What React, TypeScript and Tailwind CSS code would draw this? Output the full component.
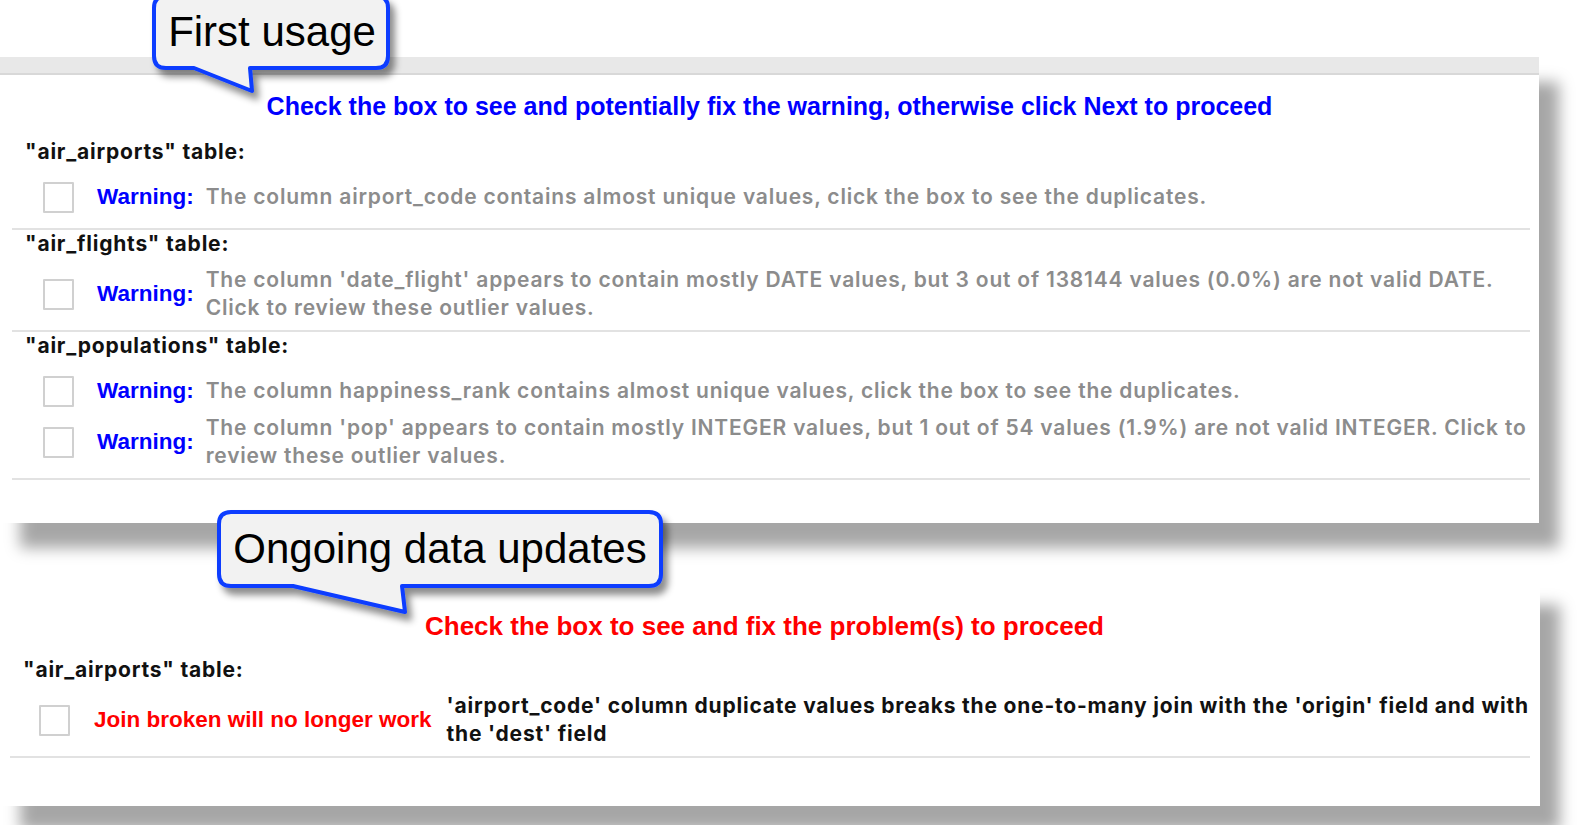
import React from "react";

const SANS = "font-['Inter',sans-serif]";
const ARIAL = "font-['Liberation_Sans',Arial,sans-serif]";

function Checkbox() {
  return <div className="w-[31px] h-[31px] shrink-0 border-2 border-[#d0d0d0] bg-white rounded-[1px]" />;
}

function TableHeader({ name }: { name: string }) {
  return (
    <div className={`h-[28px] leading-[28px] pl-[13px] text-[21px] tracking-[0.8px] font-bold text-[#111] whitespace-nowrap ${SANS}`}>
      "{name}" table:
    </div>
  );
}

function WarningRow({ lines }: { lines: string[] }) {
  return (
    <div className={`flex items-center pl-[31px] ${lines.length > 1 ? "h-[56px]" : "h-[46px]"}`}>
      <Checkbox />
      <span className={`ml-[23px] text-[22.5px] font-bold text-[#0000ff] ${ARIAL}`}>Warning:</span>
      <div className={`ml-[12px] text-[21px] tracking-[0.8px] leading-[28px] font-semibold text-[#8c8c8c] whitespace-nowrap ${SANS}`}>
        {lines.map((l, i) => (
          <div key={i}>{l}</div>
        ))}
      </div>
    </div>
  );
}

function Section({ name, children }: { name: string; children: React.ReactNode }) {
  return (
    <div className="ml-[12px] mr-[9px] border-b-2 border-[#e2e2e2]">
      <TableHeader name={name} />
      <div className="pt-2 pb-2">{children}</div>
    </div>
  );
}

export default function App() {
  return (
    <div className="relative w-[1578px] h-[825px] overflow-hidden bg-white">
      <div className="flex flex-col pt-[57px]">
        {/* first usage screenshot */}
        <div className="w-[1539px] bg-white shadow-[20px_25px_14px_rgba(0,0,0,0.35)] pb-[43px]">
          <div className="h-[18px] bg-[#e8e8e8] border-b-2 border-[#d8d8d8]" />
          <div className={`mt-[16px] h-[30px] leading-[30px] text-center text-[25px] font-bold text-[#0000ff] whitespace-nowrap ${ARIAL}`}>
            Check the box to see and potentially fix the warning, otherwise click Next to proceed
          </div>
          <div className="mt-[17px]">
            <Section name="air_airports">
              <WarningRow lines={["The column airport_code contains almost unique values, click the box to see the duplicates."]} />
            </Section>
            <Section name="air_flights">
              <WarningRow
                lines={[
                  "The column 'date_flight' appears to contain mostly DATE values, but 3 out of 138144 values (0.0%) are not valid DATE.",
                  "Click to review these outlier values.",
                ]}
              />
            </Section>
            <Section name="air_populations">
              <WarningRow lines={["The column happiness_rank contains almost unique values, click the box to see the duplicates."]} />
              <WarningRow
                lines={[
                  "The column 'pop' appears to contain mostly INTEGER values, but 1 out of 54 values (1.9%) are not valid INTEGER. Click to",
                  "review these outlier values.",
                ]}
              />
            </Section>
          </div>
        </div>

        {/* ongoing updates screenshot */}
        <div className="mt-[57px] w-[1540px] bg-white shadow-[20px_25px_14px_rgba(0,0,0,0.35)] pt-[31px] pb-[48px]">
          <div className={`h-[30px] leading-[30px] text-center pr-[11px] text-[26px] font-bold text-[#ff0000] whitespace-nowrap ${ARIAL}`}>
            Check the box to see and fix the problem(s) to proceed
          </div>
          <div className="mt-[15px] ml-[10px] mr-[10px] border-b-2 border-[#e2e2e2]">
            <TableHeader name="air_airports" />
            <div className="pt-2 pb-2">
              <div className="flex items-center h-[56px] pl-[29px]">
                <Checkbox />
                <span className={`ml-[24px] text-[22.5px] font-bold text-[#ff0000] whitespace-nowrap ${ARIAL}`}>Join broken will no longer work</span>
                <div className={`ml-[15px] text-[21px] tracking-[0.8px] leading-[28px] font-bold text-[#111] whitespace-nowrap ${SANS}`}>
                  <div>'airport_code' column duplicate values breaks the one-to-many join with the 'origin' field and with</div>
                  <div>the 'dest' field</div>
                </div>
              </div>
            </div>
          </div>
        </div>
      </div>

      {/* callouts */}
      <div className="absolute left-[140px] top-[-20px] w-[290px] h-[140px] z-10">
        <svg width="290" height="140" className="absolute inset-0">
          <defs>
            <filter id="sh1" x="-20%" y="-20%" width="140%" height="150%">
              <feDropShadow dx="5" dy="7" stdDeviation="3.5" floodColor="#000" floodOpacity="0.45" />
            </filter>
          </defs>
          <path
            d="M26,16 H236 Q248,16 248,28 V76 Q248,88 236,88 H110 L112,111 L54,88 H26 Q14,88 14,76 V28 Q14,16 26,16 Z"
            fill="#f2f2f2"
            stroke="#0a3cff"
            strokeWidth="4"
            strokeLinejoin="round"
            filter="url(#sh1)"
          />
        </svg>
        <div className={`absolute left-[15px] top-[16px] w-[234px] h-[72px] flex items-center justify-center text-[42px] leading-none text-black whitespace-nowrap ${ARIAL}`}>
          First usage
        </div>
      </div>

      <div className="absolute left-[200px] top-[495px] w-[500px] h-[140px] z-10">
        <svg width="500" height="140" className="absolute inset-0">
          <defs>
            <filter id="sh2" x="-20%" y="-20%" width="140%" height="150%">
              <feDropShadow dx="5" dy="7" stdDeviation="3.5" floodColor="#000" floodOpacity="0.45" />
            </filter>
          </defs>
          <path
            d="M31,17 H449 Q461,17 461,29 V79 Q461,91 449,91 H202 L205,117 L93,91 H31 Q19,91 19,79 V29 Q19,17 31,17 Z"
            fill="#f2f2f2"
            stroke="#0a3cff"
            strokeWidth="4"
            strokeLinejoin="round"
            filter="url(#sh2)"
          />
        </svg>
        <div className={`absolute left-[19px] top-[17px] w-[442px] h-[74px] flex items-center justify-center text-[42px] leading-none text-black whitespace-nowrap ${ARIAL}`}>
          Ongoing data updates
        </div>
      </div>
    </div>
  );
}
